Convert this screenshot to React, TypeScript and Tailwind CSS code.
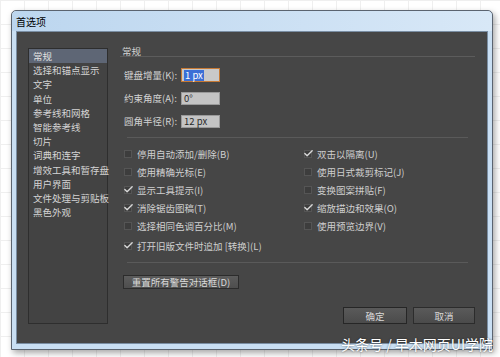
import { Check } from 'lucide-react';

const sidebarItems = [
  '常规',
  '选择和锚点显示',
  '文字',
  '单位',
  '参考线和网格',
  '智能参考线',
  '切片',
  '词典和连字',
  '增效工具和暂存盘',
  '用户界面',
  '文件处理与剪贴板',
  '黑色外观',
];

const leftChecks = [
  { label: '停用自动添加/删除(B)', checked: false },
  { label: '使用精确光标(E)', checked: false },
  { label: '显示工具提示(I)', checked: true },
  { label: '消除锯齿图稿(T)', checked: true },
  { label: '选择相同色调百分比(M)', checked: false },
];

const rightChecks = [
  { label: '双击以隔离(U)', checked: true },
  { label: '使用日式裁剪标记(J)', checked: false },
  { label: '变换图案拼贴(F)', checked: false },
  { label: '缩放描边和效果(O)', checked: true },
  { label: '使用预览边界(V)', checked: false },
];

function CheckRow({ label, checked }: { label: string; checked: boolean }) {
  return (
    <div className="flex items-center h-[18px] whitespace-nowrap">
      <div className="w-[8px] h-[8px] bg-[#3d3d3d] border border-[#555] relative flex-shrink-0">
        {checked && (
          <Check className="absolute -left-[2px] -top-[3px] w-[11px] h-[11px] text-[#d8d8d8]" strokeWidth={3} />
        )}
      </div>
      <span className="ml-[5px] text-[#cfcfcf]">{label}</span>
    </div>
  );
}

function Field({ label, value, active }: { label: string; value: string; active?: boolean }) {
  return (
    <div className="flex items-center h-[14px] whitespace-nowrap">
      <span className="w-[57px] text-[#d2d2d2]">{label}</span>
      <div
        className={
          active
            ? 'w-[39px] h-[14px] bg-[#c9c9c9] border border-[#c77a35] flex items-center px-[2px]'
            : 'w-[39px] h-[13px] bg-[#c4c4c4] border border-[#9a9a9a] flex items-center px-[2px]'
        }
      >
        {active ? (
          <span className="bg-[#3b6fd6] text-white leading-[11px] px-[1px]">{value}</span>
        ) : (
          <span className="text-[#2a2a2a] leading-[11px]">{value}</span>
        )}
      </div>
    </div>
  );
}

function App() {
  return (
    <div
      className="w-[500px] h-[357px] bg-white overflow-hidden relative pt-[10px] pl-[11px] bg-[linear-gradient(to_right,#efefef_1px,transparent_1px),linear-gradient(to_bottom,#efefef_1px,transparent_1px)] bg-[size:24px_24px]"
      style={{ fontFamily: '"Noto Sans CJK SC", "Liberation Sans", sans-serif' }}
    >
      <div className="w-[482px] h-[340px] rounded-t-[5px] border border-[#5b6470] bg-[#c9dff3] shadow-[2px_3px_6px_rgba(0,0,0,0.35)] flex flex-col">
        <div className="h-[20px] flex items-center pl-[4px] text-[10px] text-black bg-[linear-gradient(to_right,#bcd6ef,#d8e8f7)] rounded-t-[5px]">
          首选项
        </div>
        <div className="mx-[4px] mb-[5px] flex-1 bg-[#464646] border border-[#7a8ea3] flex text-[9.5px] leading-[12px]">
          <div className="ml-[11px] mt-[16px] w-[80px] h-[276px] bg-[#434343] border border-[#2e2e2e] flex flex-col">
            {sidebarItems.map((item, i) => (
              <div
                key={item}
                className={
                  i === 0
                    ? 'h-[14.2px] flex items-center pl-[4px] whitespace-nowrap bg-[#5e6675] text-[#e2e2e2]'
                    : 'h-[14.2px] flex items-center pl-[4px] whitespace-nowrap text-[#d4d4d4]'
                }
              >
                {item}
              </div>
            ))}
          </div>

          <div className="ml-[12px] mt-[13px] w-[355px] flex flex-col">
            <div className="h-[12px] pl-[2px] text-[#d2d2d2] border-b border-[#5c5c5c]">常规</div>

            <div className="mt-[11px] ml-[4px] flex flex-col gap-[9px]">
              <Field label="键盘增量(K):" value="1 px" active />
              <Field label="约束角度(A):" value="0°" />
              <Field label="圆角半径(R):" value="12 px" />
            </div>

            <div className="mt-[9px] mx-[7px] border-b border-[#5a5a5a]" />

            <div className="mt-[7px] ml-[4px] flex">
              <div className="w-[180px] flex flex-col">
                {leftChecks.map((c) => (
                  <CheckRow key={c.label} {...c} />
                ))}
              </div>
              <div className="flex flex-col">
                {rightChecks.map((c) => (
                  <CheckRow key={c.label} {...c} />
                ))}
              </div>
            </div>
            <div className="mt-[2px] ml-[4px]">
              <CheckRow label="打开旧版文件时追加 [转换](L)" checked />
            </div>

            <div className="mt-[7px] mx-[7px] border-b border-[#5a5a5a]" />

            <div className="mt-[12px] ml-[3px]">
              <button className="w-[116px] h-[14px] bg-[linear-gradient(#5c5c5c,#4e4e4e)] border border-[#2c2c2c] text-[#dadada] text-[9.5px] leading-[12px] whitespace-nowrap">
                重置所有警告对话框(D)
              </button>
            </div>

            <div className="mt-[18px] flex justify-end gap-[6px]">
              <button className="w-[64px] h-[17px] bg-[linear-gradient(#5a5a5a,#4b4b4b)] border border-[#262626] text-[#d8d8d8] text-[9.5px] leading-[12px]">
                确定
              </button>
              <button className="w-[62px] h-[17px] bg-[linear-gradient(#5a5a5a,#4b4b4b)] border border-[#2c2c2c] text-[#d8d8d8] text-[9.5px] leading-[12px]">
                取消
              </button>
            </div>
          </div>
        </div>
      </div>

      <div className="absolute right-[7px] top-[335px] text-[14px] leading-[18px] text-white whitespace-nowrap [text-shadow:0_0_2px_rgba(0,0,0,0.6)]">
        头条号 / 早木网页UI学院
      </div>
    </div>
  );
}

export default App;
